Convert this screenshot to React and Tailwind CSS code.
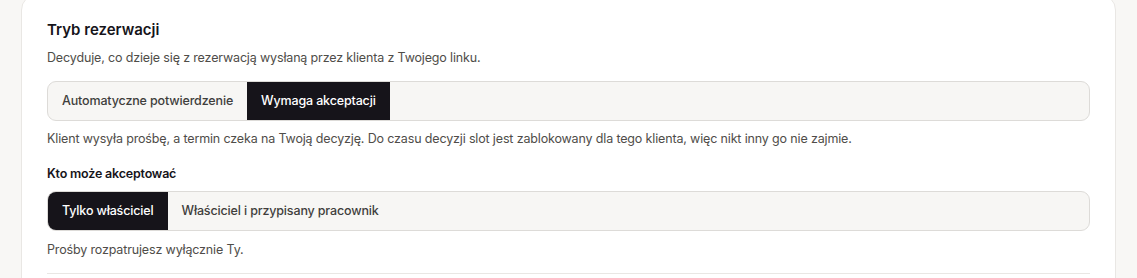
const FONT = { fontFamily: 'Inter, "Noto Sans", sans-serif' };

function Segmented({ options, active }) {
  return (
    <div className="flex h-10 w-full overflow-hidden rounded-[9px] border border-[#dddbd8] bg-[#f7f6f4]">
      {options.map((opt) => (
        <button
          key={opt}
          type="button"
          className={
            opt === active
              ? 'flex items-center bg-[#16141a] px-[14px] text-[12.5px] font-medium tracking-[-0.15px] text-white'
              : 'flex items-center px-[14px] text-[12.5px] font-medium tracking-[-0.15px] text-[#3f3e3c]'
          }
        >
          {opt}
        </button>
      ))}
    </div>
  );
}

export default function App() {
  return (
    <div className="h-[278px] w-full overflow-hidden bg-[#f8f7f5] px-[21px]" style={FONT}>
      <div className="-mt-[6px] rounded-2xl border border-[#e9e7e4] bg-white px-[25px] pt-[25px]">
        <h2 className="text-[15px] font-semibold leading-5 text-[#16141a]">Tryb rezerwacji</h2>
        <p className="mt-[8px] text-[12.5px] leading-5 tracking-[-0.15px] text-[#4f4d49]">
          Decyduje, co dzieje się z rezerwacją wysłaną przez klienta z Twojego linku.
        </p>
        <div className="mt-[13px]">
          <Segmented
            options={['Automatyczne potwierdzenie', 'Wymaga akceptacji']}
            active="Wymaga akceptacji"
          />
        </div>
        <p className="mt-[8px] text-[12.5px] leading-5 tracking-[-0.15px] text-[#4f4d49]">
          Klient wysyła prośbę, a termin czeka na Twoją decyzję. Do czasu decyzji slot jest zablokowany dla tego klienta, więc nikt inny go nie zajmie.
        </p>
        <h3 className="mt-[15px] text-[12.5px] font-semibold leading-5 tracking-[-0.2px] text-[#16141a]">Kto może akceptować</h3>
        <div className="mt-[7px]">
          <Segmented
            options={['Tylko właściciel', 'Właściciel i przypisany pracownik']}
            active="Tylko właściciel"
          />
        </div>
        <p className="mt-[9px] text-[12.5px] leading-5 tracking-[-0.15px] text-[#4f4d49]">Prośby rozpatrujesz wyłącznie Ty.</p>
        <div className="mt-[13px] border-t border-[#e9e7e4] pb-6" />
      </div>
    </div>
  );
}
